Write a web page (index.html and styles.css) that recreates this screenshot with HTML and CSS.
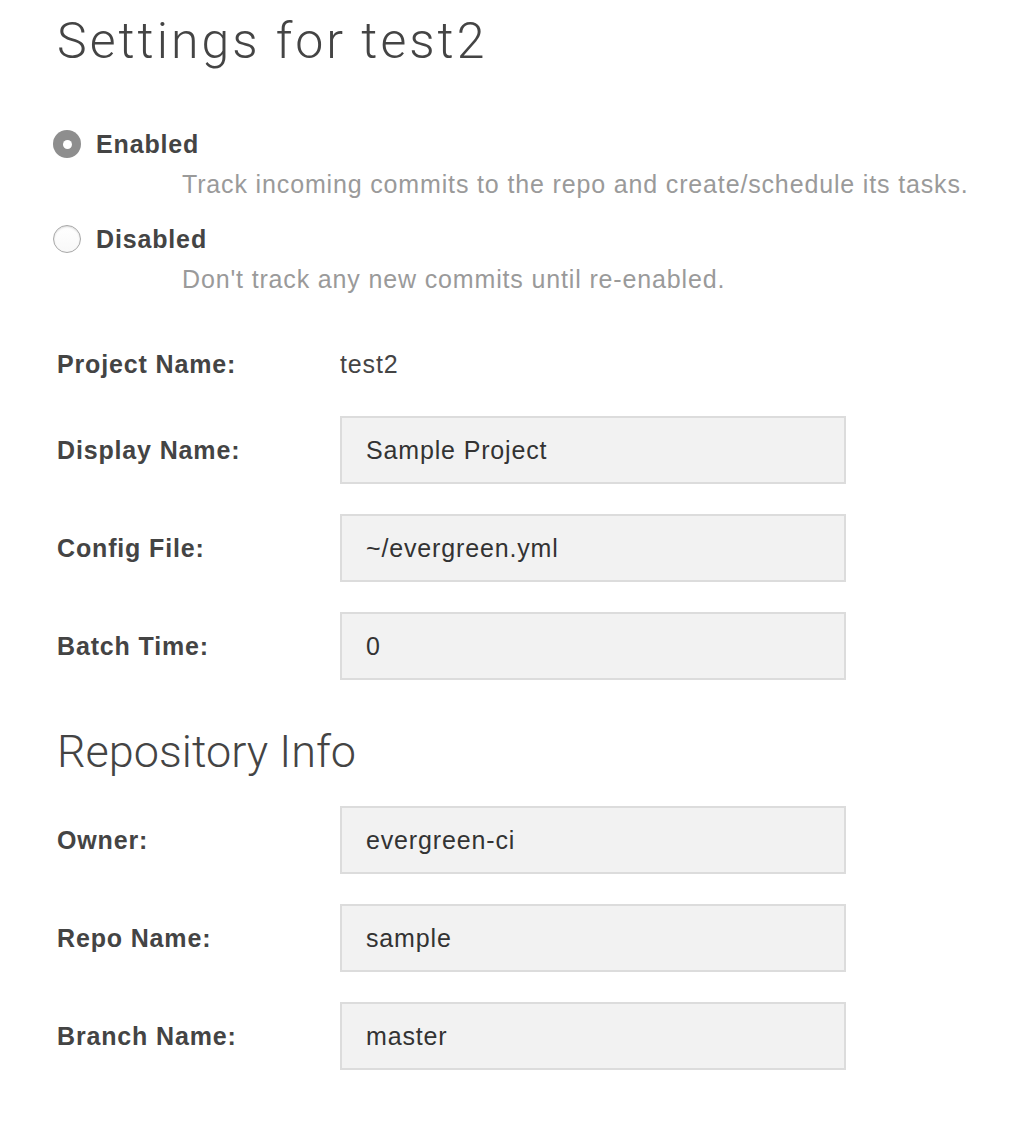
FILE: index.html
```html
<!DOCTYPE html>
<html>
<head>
<meta charset="utf-8">
<link rel="stylesheet" href="styles.css">
</head>
<body>
<div class="page">
  <h1 class="title">Settings for test2</h1>

  <div class="radio-group">
    <div class="radio-option">
      <span class="radio radio-checked"></span>
      <span class="radio-label">Enabled</span>
    </div>
    <p class="radio-desc">Track incoming commits to the repo and create/schedule its tasks.</p>
    <div class="radio-option radio-option-second">
      <span class="radio"></span>
      <span class="radio-label">Disabled</span>
    </div>
    <p class="radio-desc">Don't track any new commits until re-enabled.</p>
  </div>

  <div class="form">
    <div class="form-row form-row-static">
      <span class="form-label">Project Name:</span>
      <span class="form-value">test2</span>
    </div>
    <div class="form-row">
      <span class="form-label">Display Name:</span>
      <input class="form-input" type="text" value="Sample Project">
    </div>
    <div class="form-row">
      <span class="form-label">Config File:</span>
      <input class="form-input" type="text" value="~/evergreen.yml">
    </div>
    <div class="form-row">
      <span class="form-label">Batch Time:</span>
      <input class="form-input" type="text" value="0">
    </div>
  </div>

  <h2 class="section-title">Repository Info</h2>

  <div class="form">
    <div class="form-row">
      <span class="form-label">Owner:</span>
      <input class="form-input" type="text" value="evergreen-ci">
    </div>
    <div class="form-row">
      <span class="form-label">Repo Name:</span>
      <input class="form-input" type="text" value="sample">
    </div>
    <div class="form-row">
      <span class="form-label">Branch Name:</span>
      <input class="form-input" type="text" value="master">
    </div>
  </div>
</div>
</body>
</html>
```

FILE: styles.css
```css
html, body {
  margin: 0;
  padding: 0;
  background: #ffffff;
}

body {
  font-family: "Liberation Sans", Arial, sans-serif;
  color: #444444;
  letter-spacing: 0.85px;
}

.page {
  padding: 11px 0 40px 57px;
}

.title {
  margin: 0;
  font-family: Roboto, "Liberation Sans", sans-serif;
  font-weight: 300;
  font-size: 50px;
  line-height: 60px;
  letter-spacing: 3px;
  color: #444444;
}

.radio-group {
  margin-top: 53px;
}

.radio-option {
  display: flex;
  align-items: center;
  height: 40px;
  margin-left: -4px;
}

.radio-option-second {
  margin-top: 15px;
}

.radio {
  box-sizing: border-box;
  width: 28px;
  height: 28px;
  border-radius: 50%;
  border: 1.5px solid #a8a8a8;
  background: linear-gradient(#ffffff, #f8f8f8);
  box-shadow: inset 0 1px 2px rgba(0, 0, 0, 0.15);
  margin-right: 15px;
  position: relative;
}

.radio-checked {
  border: none;
  background: #8e8e8e;
  box-shadow: none;
}

.radio-checked::after {
  content: "";
  position: absolute;
  left: 50%;
  top: 50%;
  width: 9px;
  height: 9px;
  margin: -4.5px 0 0 -4.5px;
  border-radius: 50%;
  background: #ffffff;
}

.radio-label {
  font-weight: bold;
  font-size: 25px;
  color: #444444;
}

.radio-desc {
  margin: 0 0 0 125px;
  height: 40px;
  line-height: 40px;
  font-size: 25px;
  color: #9a9a9a;
}

.form {
  display: flex;
  flex-direction: column;
  gap: 30px;
}

.form-row {
  display: flex;
  align-items: center;
  height: 68px;
}

.form-row-static {
  height: 40px;
  margin-top: 45px;
  margin-bottom: 2px;
}

.form-label {
  width: 283px;
  flex: none;
  font-weight: bold;
  font-size: 25px;
  color: #444444;
}

.form-value {
  font-size: 25px;
  color: #444444;
}

.form-input {
  box-sizing: border-box;
  width: 506px;
  height: 68px;
  margin: 0;
  padding: 0 24px;
  border: 2px solid #dcdcdc;
  border-radius: 0;
  background: #f2f2f2;
  font-family: "Liberation Sans", Arial, sans-serif;
  font-size: 25px;
  letter-spacing: 0.85px;
  color: #333333;
  outline: none;
}

.section-title {
  margin: 44px 0 26px 0;
  font-family: Roboto, "Liberation Sans", sans-serif;
  font-weight: 300;
  font-size: 45px;
  line-height: 56px;
  letter-spacing: 0;
  color: #444444;
}
```
